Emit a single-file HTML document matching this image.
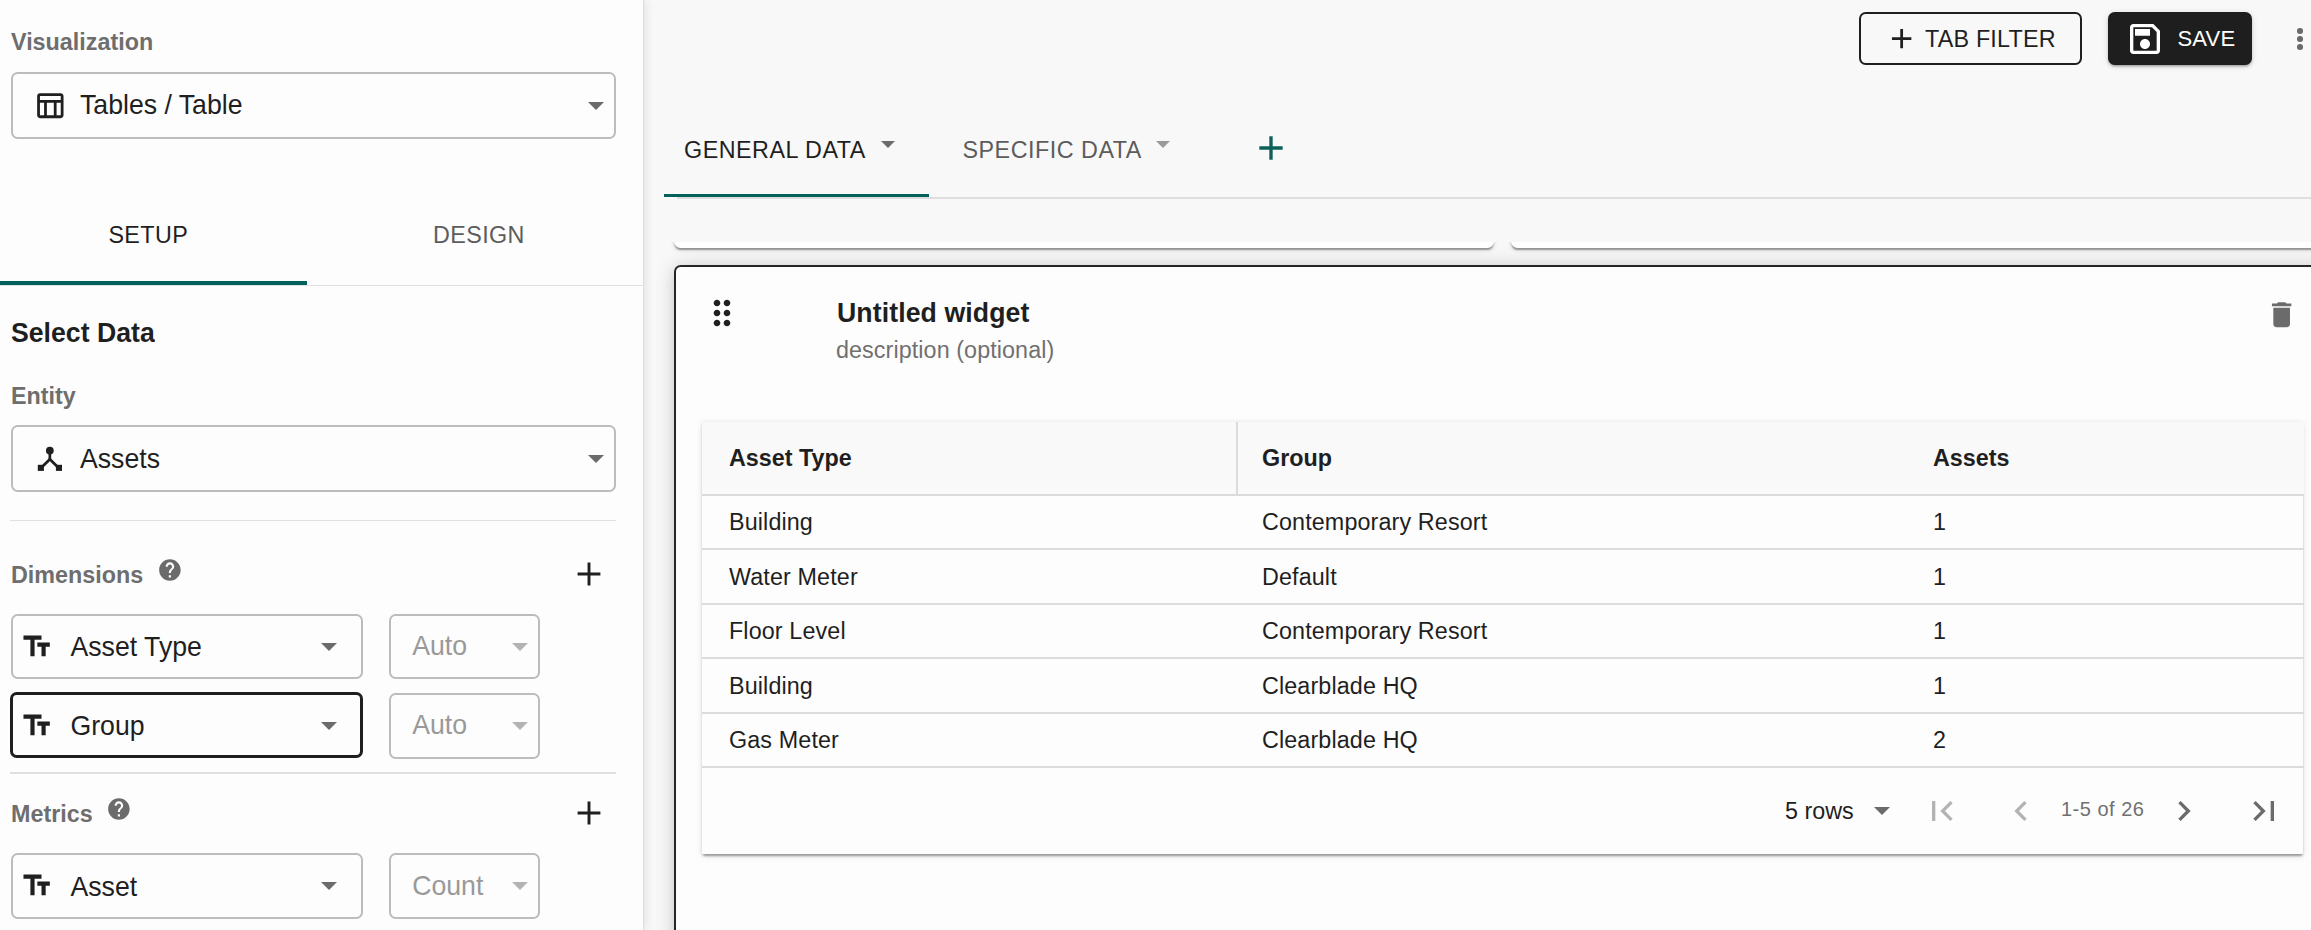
<!DOCTYPE html>
<html><head><meta charset="utf-8">
<style>
*{box-sizing:border-box;margin:0;padding:0}
html,body{width:2311px;height:930px;overflow:hidden;background:#f8f8f8;font-family:"Liberation Sans",sans-serif;color:#1f1f1f}
.abs{position:absolute}
.t{position:absolute;white-space:nowrap;line-height:1;transform:scaleY(1.04);transform-origin:0 84.65%}
#left{position:absolute;left:0;top:0;width:643.6px;height:930px;background:#fdfdfd;border-right:1.2px solid #dcdcdc;box-shadow:2px 0 9px rgba(0,0,0,.09)}
.lbl{font-size:23.33px;font-weight:700;color:#6e6e6e}
.box{position:absolute;border:2px solid #bcbcbc;border-radius:6.67px}
.arrow{position:absolute;width:0;height:0;border-left:8.33px solid transparent;border-right:8.33px solid transparent;border-top:8.33px solid #6b6b6b}
.arrow.light{border-top-color:#b3b3b3}
.divider{position:absolute;height:1.67px;background:#e0e0e0}
.val{font-size:26.67px;color:#1f1f1f}
.cell{font-size:23.33px;color:#1f1f1f;letter-spacing:0.12px}
.hcell{font-size:23.33px;font-weight:700;color:#1f1f1f}
.dis{font-size:26.67px;color:#999999}
</style></head><body>
<div id="left">
  <div class="t lbl" style="left:11px;top:31.2px">Visualization</div>
  <div class="box" style="left:10.5px;top:72px;width:605px;height:67px"></div>
  <svg class="abs" style="left:33.4px;top:88.9px" width="33.3" height="33.3" viewBox="0 0 24 24"><path fill="#1f1f1f" d="M20 3H5c-1.1 0-2 .9-2 2v14c0 1.1.9 2 2 2h15c1.1 0 2-.9 2-2V5c0-1.1-.9-2-2-2zm0 2v3H5V5h15zm-5 14h-5v-9h5v9zM5 10h3v9H5v-9zm12 9v-9h3v9h-3z"/></svg>
  <div class="t val" style="left:80px;top:92.3px">Tables / Table</div>
  <div class="arrow" style="left:588px;top:102px"></div>

  <div class="t" style="left:108.4px;top:223.8px;font-size:23.33px;letter-spacing:0.4px;color:#1f1f1f">SETUP</div>
  <div class="t" style="left:433px;top:223.8px;font-size:23.33px;letter-spacing:0.4px;color:#5c5c5c">DESIGN</div>
  <div class="divider" style="left:0;top:284.5px;width:643px"></div>
  <div class="abs" style="left:0;top:281.2px;width:306.7px;height:3.4px;background:#02615a"></div>

  <div class="t" style="left:11px;top:319.5px;font-size:26.67px;font-weight:700;color:#1f1f1f">Select Data</div>
  <div class="t lbl" style="left:11px;top:384.9px">Entity</div>
  <div class="box" style="left:10.5px;top:425px;width:605px;height:67px"></div>
  <svg class="abs" style="left:25px;top:435px" width="50" height="50" viewBox="0 0 50 50"><circle cx="24.84" cy="15.6" r="3.9" fill="#1f1f1f"/><rect x="23.5" y="16" width="2.7" height="9" fill="#1f1f1f"/><path d="M24.84 24.2L17.5 31.5M24.84 24.2L32.2 31.5" stroke="#1f1f1f" stroke-width="2.7" fill="none"/><rect x="12.8" y="29.8" width="6.1" height="6.1" fill="#1f1f1f"/><rect x="30.9" y="29.8" width="6.1" height="6.1" fill="#1f1f1f"/></svg>
  <div class="t val" style="left:80px;top:446px">Assets</div>
  <div class="arrow" style="left:588px;top:455px"></div>

  <div class="divider" style="left:10px;top:519.5px;width:605.5px"></div>

  <div class="t lbl" style="left:11px;top:563.7px">Dimensions</div>
  <svg class="abs" style="left:157.4px;top:556.7px" width="25.8" height="25.8" viewBox="0 0 24 24"><path fill="#6b6b6b" d="M12 2C6.48 2 2 6.48 2 12s4.48 10 10 10 10-4.48 10-10S17.52 2 12 2zm1 17h-2v-2h2v2zm2.07-7.75-.9.92C13.45 12.9 13 13.5 13 15h-2v-.5c0-1.1.45-2.1 1.17-2.83l1.24-1.26c.37-.36.59-.86.59-1.41 0-1.1-.9-2-2-2s-2 .9-2 2H8c0-2.21 1.79-4 4-4s4 1.79 4 4c0 .88-.36 1.68-.93 2.25z"/></svg>
  <svg class="abs" style="left:564.2px;top:548.7px" width="50" height="50" viewBox="0 0 50 50"><path fill="#1f1f1f" d="M13.6 23.55h22.8v2.9h-22.8zM23.55 13.6h2.9v22.8h-2.9z"/></svg>

  <div class="box" style="left:10.5px;top:614px;width:352.5px;height:65px"></div>
  <svg class="abs" style="left:20.1px;top:630px" width="33.3" height="33.3" viewBox="0 0 24 24"><path fill="#1f1f1f" d="M2.5 4v3h5v12h3V7h5V4h-13zm19 5h-9v3h3v7h3v-7h3V9z"/></svg>
  <div class="t val" style="left:70.5px;top:633.5px">Asset Type</div>
  <div class="arrow" style="left:320.5px;top:643px"></div>
  <div class="box" style="left:389px;top:614px;width:151px;height:65px"></div>
  <div class="t dis" style="left:412.2px;top:632.8px">Auto</div>
  <div class="arrow light" style="left:512px;top:643px"></div>

  <div class="box" style="left:10px;top:692.2px;width:353.3px;height:66.3px;border:3.6px solid #1f1f1f"></div>
  <svg class="abs" style="left:20.1px;top:709px" width="33.3" height="33.3" viewBox="0 0 24 24"><path fill="#1f1f1f" d="M2.5 4v3h5v12h3V7h5V4h-13zm19 5h-9v3h3v7h3v-7h3V9z"/></svg>
  <div class="t val" style="left:70.5px;top:713px">Group</div>
  <div class="arrow" style="left:320.5px;top:722px"></div>
  <div class="box" style="left:389px;top:693px;width:151px;height:65.5px"></div>
  <div class="t dis" style="left:412.2px;top:711.8px">Auto</div>
  <div class="arrow light" style="left:512px;top:722px"></div>

  <div class="divider" style="left:10px;top:772px;width:605.5px"></div>

  <div class="t lbl" style="left:11px;top:802.6px">Metrics</div>
  <svg class="abs" style="left:106.2px;top:796.1px" width="25.8" height="25.8" viewBox="0 0 24 24"><path fill="#6b6b6b" d="M12 2C6.48 2 2 6.48 2 12s4.48 10 10 10 10-4.48 10-10S17.52 2 12 2zm1 17h-2v-2h2v2zm2.07-7.75-.9.92C13.45 12.9 13 13.5 13 15h-2v-.5c0-1.1.45-2.1 1.17-2.83l1.24-1.26c.37-.36.59-.86.59-1.41 0-1.1-.9-2-2-2s-2 .9-2 2H8c0-2.21 1.79-4 4-4s4 1.79 4 4c0 .88-.36 1.68-.93 2.25z"/></svg>
  <svg class="abs" style="left:564.2px;top:788.3px" width="50" height="50" viewBox="0 0 50 50"><path fill="#1f1f1f" d="M13.6 23.55h22.8v2.9h-22.8zM23.55 13.6h2.9v22.8h-2.9z"/></svg>

  <div class="box" style="left:10.5px;top:853px;width:352.5px;height:65.5px"></div>
  <svg class="abs" style="left:20.1px;top:869.2px" width="33.3" height="33.3" viewBox="0 0 24 24"><path fill="#1f1f1f" d="M2.5 4v3h5v12h3V7h5V4h-13zm19 5h-9v3h3v7h3v-7h3V9z"/></svg>
  <div class="t val" style="left:70.5px;top:873.5px">Asset</div>
  <div class="arrow" style="left:320.5px;top:882px"></div>
  <div class="box" style="left:389px;top:853px;width:151px;height:65.5px"></div>
  <div class="t dis" style="left:412.2px;top:872.6px">Count</div>
  <div class="arrow light" style="left:512px;top:882px"></div>
</div>

<!-- RIGHT -->
<div id="right">
  <!-- top buttons -->
  <div class="abs" style="left:1859.3px;top:12.4px;width:222.6px;height:52.2px;border:2px solid #1f1f1f;border-radius:6.67px"></div>
  <svg class="abs" style="left:1885.1px;top:21.8px" width="33.3" height="33.3" viewBox="0 0 24 24"><path fill="#1f1f1f" d="M19 13h-6v6h-2v-6H5v-2h6V5h2v6h6v2z"/></svg>
  <div class="t" style="left:1925px;top:28.4px;font-size:23.33px;letter-spacing:0.2px;color:#1f1f1f">TAB FILTER</div>
  <div class="abs" style="left:2108.3px;top:12px;width:143.3px;height:52.5px;background:#1e1e1e;border-radius:6.67px;box-shadow:0 3px 2px -2px rgba(0,0,0,.2),0 2px 3px 0 rgba(0,0,0,.14),0 1px 6px 0 rgba(0,0,0,.12)"></div>
  <svg class="abs" style="left:2124.9px;top:18.9px" width="40" height="40" viewBox="0 0 24 24"><path fill="#ffffff" d="M17 3H5c-1.11 0-2 .9-2 2v14c0 1.1.89 2 2 2h14c1.1 0 2-.9 2-2V7l-4-4zm2 16H5V5h11.17L19 7.83V19zm-7-7c-1.66 0-3 1.34-3 3s1.34 3 3 3 3-1.34 3-3-1.34-3-3-3zM6 6h9v4H6z"/></svg>
  <div class="t" style="left:2177.5px;top:27.9px;font-size:22px;letter-spacing:0.2px;color:#ffffff">SAVE</div>
  <div class="abs" style="left:2297px;top:28px;width:5.6px;height:5.6px;border-radius:50%;background:#6b6b6b"></div>
  <div class="abs" style="left:2297px;top:36.2px;width:5.6px;height:5.6px;border-radius:50%;background:#6b6b6b"></div>
  <div class="abs" style="left:2297px;top:44.4px;width:5.6px;height:5.6px;border-radius:50%;background:#6b6b6b"></div>

  <!-- dashboard tabs -->
  <div class="t" style="left:684px;top:138.5px;font-size:23.33px;letter-spacing:0.5px;color:#1f1f1f">GENERAL DATA</div>
  <div class="arrow" style="left:880.5px;top:141px;border-left-width:7px;border-right-width:7px;border-top-width:7.5px"></div>
  <div class="t" style="left:962.5px;top:138.5px;font-size:23.33px;letter-spacing:0.5px;color:#5c5c5c">SPECIFIC DATA</div>
  <div class="arrow" style="left:1156px;top:141px;border-left-width:7px;border-right-width:7px;border-top-width:7.5px;border-top-color:#9a9a9a"></div>
  <svg class="abs" style="left:1250.7px;top:127.9px" width="40" height="40" viewBox="0 0 24 24"><path fill="#0b615a" d="M19 13h-6v6h-2v-6H5v-2h6V5h2v6h6v2z"/></svg>
  <div class="abs" style="left:677px;top:197.3px;width:1634px;height:1.67px;background:#dedede"></div>
  <div class="abs" style="left:664px;top:194px;width:265px;height:3.4px;background:#02615a"></div>

  <!-- scroll area -->
  <div class="abs" style="left:650px;top:242px;width:1661px;height:688px;overflow:hidden">
    <div class="abs" style="left:24px;top:-60px;width:819.5px;height:65.5px;background:#fff;border-radius:6.67px;box-shadow:0 3px 1.5px -1.5px rgba(0,0,0,.22),0 1.67px 1.67px 0 rgba(0,0,0,.16),0 1.67px 5px 0 rgba(0,0,0,.12)"></div>
    <div class="abs" style="left:861px;top:-60px;width:900px;height:65.5px;background:#fff;border-radius:6.67px;box-shadow:0 3px 1.5px -1.5px rgba(0,0,0,.22),0 1.67px 1.67px 0 rgba(0,0,0,.16),0 1.67px 5px 0 rgba(0,0,0,.12)"></div>
    <div id="card" class="abs" style="left:24px;top:23px;width:1700px;height:800px;background:#fdfdfd;border:2.2px solid #262626;border-radius:6.67px;box-shadow:0 6px 14px rgba(0,0,0,.08),0 0 20px rgba(0,0,0,.14)">
    </div>
  </div>
  <!-- card content -->
  <svg class="abs" style="left:701.7px;top:292.8px" width="40" height="40" viewBox="0 0 24 24"><path fill="#1f1f1f" d="M11 18c0 1.1-.9 2-2 2s-2-.9-2-2 .9-2 2-2 2 .9 2 2zm-2-8c-1.1 0-2 .9-2 2s.9 2 2 2 2-.9 2-2-.9-2-2-2zm0-6c-1.1 0-2 .9-2 2s.9 2 2 2 2-.9 2-2-.9-2-2-2zm6 4c1.1 0 2-.9 2-2s-.9-2-2-2-2 .9-2 2 .9 2 2 2zm0 2c-1.1 0-2 .9-2 2s.9 2 2 2 2-.9 2-2-.9-2-2-2zm0 6c-1.1 0-2 .9-2 2s.9 2 2 2 2-.9 2-2-.9-2-2-2z"/></svg>
  <div class="t" style="left:837px;top:300px;font-size:26.67px;font-weight:700;letter-spacing:0.1px;color:#1f1f1f">Untitled widget</div>
  <div class="t" style="left:836px;top:339.3px;font-size:23.33px;letter-spacing:0.08px;color:#707070">description (optional)</div>
  <svg class="abs" style="left:2265px;top:297.9px" width="33.3" height="33.3" viewBox="0 0 24 24"><path fill="#6b6b6b" d="M6 19c0 1.1.9 2 2 2h8c1.1 0 2-.9 2-2V7H6v12zM19 4h-3.5l-1-1h-5l-1 1H5v2h14V4z"/></svg>

  <!-- table -->
  <div class="abs" style="left:701.5px;top:422px;width:1601.5px;height:432px;background:#fdfdfd;border-radius:1px;box-shadow:0 3.33px 2px -1.5px rgba(0,0,0,.22),0 1.67px 2px 0 rgba(0,0,0,.15),0 1.67px 6px 0 rgba(0,0,0,.12)"></div>
  <div class="abs" style="left:701.5px;top:422px;width:1602px;height:72px;background:#f9f9f9"></div>
  <div class="abs" style="left:701.5px;top:494px;width:1602px;height:1.67px;background:#dbdbdb"></div>
  <div class="abs" style="left:1236.2px;top:422px;width:1.8px;height:72px;background:#dbdbdb"></div>
  <div class="t hcell" style="left:729px;top:446.6px">Asset Type</div>
  <div class="t hcell" style="left:1262px;top:446.6px">Group</div>
  <div class="t hcell" style="left:1933px;top:446.6px">Assets</div>
  <div class="t cell" style="left:729px;top:511.45px">Building</div>
  <div class="t cell" style="left:1262px;top:511.45px">Contemporary Resort</div>
  <div class="t cell" style="left:1933px;top:511.45px">1</div>
  <div class="abs" style="left:702px;top:548px;width:1601.5px;height:2px;background:#dcdcdc"></div>
  <div class="t cell" style="left:729px;top:565.95px">Water Meter</div>
  <div class="t cell" style="left:1262px;top:565.95px">Default</div>
  <div class="t cell" style="left:1933px;top:565.95px">1</div>
  <div class="abs" style="left:702px;top:602.5px;width:1601.5px;height:2px;background:#dcdcdc"></div>
  <div class="t cell" style="left:729px;top:620.45px">Floor Level</div>
  <div class="t cell" style="left:1262px;top:620.45px">Contemporary Resort</div>
  <div class="t cell" style="left:1933px;top:620.45px">1</div>
  <div class="abs" style="left:702px;top:657px;width:1601.5px;height:2px;background:#dcdcdc"></div>
  <div class="t cell" style="left:729px;top:674.95px">Building</div>
  <div class="t cell" style="left:1262px;top:674.95px">Clearblade HQ</div>
  <div class="t cell" style="left:1933px;top:674.95px">1</div>
  <div class="abs" style="left:702px;top:711.5px;width:1601.5px;height:2px;background:#dcdcdc"></div>
  <div class="t cell" style="left:729px;top:729.45px">Gas Meter</div>
  <div class="t cell" style="left:1262px;top:729.45px">Clearblade HQ</div>
  <div class="t cell" style="left:1933px;top:729.45px">2</div>
  <div class="abs" style="left:702px;top:766px;width:1601.5px;height:2px;background:#dcdcdc"></div>

  <div class="t" style="left:1785px;top:799.8px;font-size:23.33px;color:#1f1f1f">5 rows</div>
  <div class="arrow" style="left:1874px;top:807.4px"></div>
  <svg class="abs" style="left:1921.5px;top:790.8px" width="40" height="40" viewBox="0 0 24 24"><path fill="#b3b3b3" d="M18.41 16.59L13.82 12l4.59-4.59L17 6l-6 6 6 6zM6 6h2v12H6z"/></svg>
  <svg class="abs" style="left:2001px;top:790.8px" width="40" height="40" viewBox="0 0 24 24"><path fill="#b3b3b3" d="M15.41 7.41L14 6l-6 6 6 6 1.41-1.41L10.83 12z"/></svg>
  <div class="t" style="left:2061px;top:799.3px;font-size:20px;letter-spacing:0.5px;color:#707070">1-5 of 26</div>
  <svg class="abs" style="left:2164.3px;top:790.8px" width="40" height="40" viewBox="0 0 24 24"><path fill="#6b6b6b" d="M10 6L8.59 7.41 13.17 12l-4.58 4.59L10 18l6-6z"/></svg>
  <svg class="abs" style="left:2244.2px;top:790.8px" width="40" height="40" viewBox="0 0 24 24"><path fill="#6b6b6b" d="M5.59 7.41L10.18 12l-4.59 4.59L7 18l6-6-6-6zM16 6h2v12h-2z"/></svg>
</div>
</body></html>
